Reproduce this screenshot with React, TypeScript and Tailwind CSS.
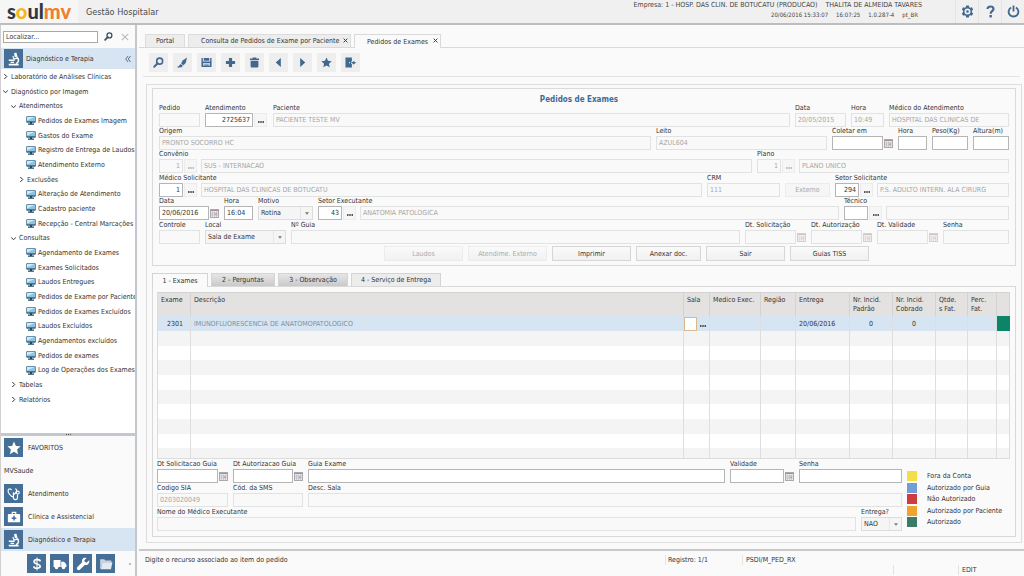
import { useId, useState } from 'react';
import type { ReactNode } from 'react';
import { clsx } from 'clsx';

type MenuItem = { label: string; level: number; state?: 'open' | 'closed' };

const MENU: MenuItem[] = [
  { label: 'Laboratório de Análises Clínicas', level: 0, state: 'closed' },
  { label: 'Diagnóstico por Imagem', level: 0, state: 'open' },
  { label: 'Atendimentos', level: 1, state: 'open' },
  { label: 'Pedidos de Exames Imagem', level: 2 },
  { label: 'Gastos do Exame', level: 2 },
  { label: 'Registro de Entrega de Laudos', level: 2 },
  { label: 'Atendimento Externo', level: 2 },
  { label: 'Exclusões', level: 2, state: 'closed' },
  { label: 'Alteração de Atendimento', level: 2 },
  { label: 'Cadastro paciente', level: 2 },
  { label: 'Recepção - Central Marcações', level: 2 },
  { label: 'Consultas', level: 1, state: 'open' },
  { label: 'Agendamento de Exames', level: 2 },
  { label: 'Exames Solicitados', level: 2 },
  { label: 'Laudos Entregues', level: 2 },
  { label: 'Pedidos de Exame por Paciente', level: 2 },
  { label: 'Pedidos de Exames Excluídos', level: 2 },
  { label: 'Laudos Excluídos', level: 2 },
  { label: 'Agendamentos excluídos', level: 2 },
  { label: 'Pedidos de exames', level: 2 },
  { label: 'Log de Operações dos Exames', level: 2 },
  { label: 'Tabelas', level: 1, state: 'closed' },
  { label: 'Relatórios', level: 1, state: 'closed' },
];

const COLUMNS = [
  { label: 'Exame', width: 'w-[33px]' },
  { label: 'Descrição', width: '' },
  { label: 'Sala', width: 'w-[26px]' },
  { label: 'Medico Exec.', width: 'w-[51px]' },
  { label: 'Região', width: 'w-[35px]' },
  { label: 'Entrega', width: 'w-[54px]' },
  { label: 'Nr. Incid. Padrão', width: 'w-[43px]' },
  { label: 'Nr. Incid. Cobrado', width: 'w-[43px]' },
  { label: 'Qtde.\ns Fat.', width: 'w-[32px]' },
  { label: 'Perc. Fat.', width: 'w-[29px]' },
  { label: '', width: 'w-[13px]' },
];

const LEGEND = [
  { label: 'Fora da Conta', color: 'bg-[#f2df45]' },
  { label: 'Autorizado por Guia', color: 'bg-[#6f9fd4]' },
  { label: 'Não Autorizado', color: 'bg-[#cf3b3e]' },
  { label: 'Autorizado por Paciente', color: 'bg-[#efa32f]' },
  { label: 'Autorizado', color: 'bg-[#3b7c68]' },
];

const DETAIL_TABS = ['1 - Exames', '2 - Perguntas', '3 - Observação', '4 - Serviço de Entrega'];

/* ---------- Ícones ---------- */

function Svg({ children, className }: { children: ReactNode; className?: string }) {
  return (
    <svg viewBox="0 0 24 24" fill="currentColor" className={clsx('shrink-0', className)} aria-hidden>
      {children}
    </svg>
  );
}

const ICONS = {
  search: (
    <>
      <circle cx="14.5" cy="9" r="6.5" fill="none" stroke="currentColor" strokeWidth="3.4" />
      <path d="M10 13.5 3 21" stroke="currentColor" strokeWidth="4.6" strokeLinecap="round" />
    </>
  ),
  brush: (
    <>
      <path d="M22 1 13 7l-4 7 5 4 5-5z" />
      <path d="m8 15 5 4-3 3.500-9 .5z" />
      <path d="M1 20h3v3H1z" opacity=".6" />
    </>
  ),
  save: (
    <path
      fillRule="evenodd"
      d="M1 2h3v8h16V2h3v20H1zM6 2h12v6H6zM5 13v6h14v-6zm2 1.500h10v1.300H7zm0 2.500h10v1.300H7z"
    />
  ),
  plus: <path d="M8.500 2h7v6.500H22v7h-6.500V22h-7v-6.500H2v-7h6.500z" />,
  trash: <path d="M8 1h8v2h6v3.500H2V3h6zM3.500 8h17v12.500a2.500 2.500 0 0 1-2.500 2.500H6a2.500 2.500 0 0 1-2.500-2.500z" />,
  prev: <path d="M17 2v20L6 12z" />,
  next: <path d="M7 2v20l11-10z" />,
  star: <path d="m12 1 3.300 7.400 8 .8-6 5.400 1.700 7.900-7-4.100-7 4.100 1.700-7.900-6-5.400 8-.8z" />,
  exit: (
    <path
      fillRule="evenodd"
      d="M1 1h14v9h-2v5h2v8H1zm8 10v2.500h2V11zM18 8l6 4.500-6 4.500v-3h-4v-3h4z"
    />
  ),
  gear: (
    <path
      fillRule="evenodd"
      d="M9.500 1h5l.7 3 1.800 1 3-.9 2.500 4.300-2.300 2.100v3l2.300 2.100-2.500 4.300-3-.9-1.800 1-.7 3h-5l-.7-3-1.800-1-3 .9-2.500-4.300 2.300-2.100v-3L1.500 8.400 4 4.100l3 .9 1.800-1zM12 6.500a5.500 5.500 0 1 0 0 11 5.500 5.500 0 0 0 0-11zm0 3a2.500 2.500 0 1 1 0 5 2.500 2.500 0 0 1 0-5z"
    />
  ),
  help: (
    <>
      <path
        d="M6.500 7.500C6.500 4 9 2.800 12 2.800s5.500 1.700 5.500 4.700c0 4-5.200 4-5.200 8.500"
        fill="none"
        stroke="currentColor"
        strokeWidth="4"
      />
      <path d="M10 18.500h4.500V23H10z" />
    </>
  ),
  power: (
    <g fill="none" stroke="currentColor" strokeWidth="3.400">
      <path d="M7.500 4.500a9 9 0 1 0 9 0" />
      <path d="M12 1v11" />
    </g>
  ),
  microscope: (
    <>
      <path d="m12 2 4-1 2 7-4.500 1.200z" />
      <path d="m10 7 2 5 6-1.500" fill="none" stroke="currentColor" strokeWidth="2" />
      <path d="M16.500 9c5 3 4 9-1 11" fill="none" stroke="currentColor" strokeWidth="2.600" />
      <path d="M3 13h10v2.500H3zM6 16.500h6V19H6zM3 20h17v3H3z" />
    </>
  ),
  stethoscope: (
    <g fill="none" stroke="currentColor" strokeWidth="2">
      <path d="M5 3C1 3 1 8 4 12c2 3 4 5 7 5M5 3l3 2M14 3c4 0 3 7-3 10" />
      <path d="M11 9v9c0 5 7 5 7 0v-5" />
      <circle cx="18.500" cy="9.500" r="2.500" />
    </g>
  ),
  kit: (
    <path
      fillRule="evenodd"
      d="M8 3h8v4h5a1.500 1.500 0 0 1 1.500 1.500v11A1.500 1.500 0 0 1 21 21H3a1.500 1.500 0 0 1-1.500-1.500v-11A1.500 1.500 0 0 1 3 7h5zm2 2v2h4V5zm.7 5v2.700H8v2.600h2.700V18h2.600v-2.700H16v-2.600h-2.700V10z"
    />
  ),
  dollar: (
    <g fill="none" stroke="currentColor" strokeWidth="2.800">
      <path d="M17.500 7.500C17 3.500 7 3.500 7 8s10.500 3.500 10.500 8-10.500 4.500-11 0" />
      <path d="M12 1v22" strokeWidth="1.800" />
    </g>
  ),
  truck: (
    <>
      <path d="M1 5h12v12H1zM14 8h5l4 5v4h-9z" />
      <circle cx="6" cy="18" r="3" />
      <circle cx="18" cy="18" r="3" />
    </>
  ),
  wrench: (
    <path d="M22.500 5.500 18.500 9.500 15 8.500 14.300 5.500 18 1.500C13 0 9 4 10.500 9L2 17.500c-2 3 2 6.500 4.500 4.500L15 13.500c5 1.500 9-3 7.500-8z" />
  ),
  folder: (
    <>
      <path d="M2 4h7l2 2h10v3H6L3 20H2z" opacity=".7" />
      <path d="M6 9h17l-2.500 12H3z" opacity=".85" />
    </>
  ),
};

type IconName = keyof typeof ICONS;

function Icon({ name, className }: { name: IconName; className?: string }) {
  return <Svg className={className}>{ICONS[name]}</Svg>;
}

function Tile({ name }: { name: IconName }) {
  return (
    <span className="flex size-[19px] shrink-0 items-center justify-center bg-[#466f98] text-white">
      <Icon name={name} className="size-3.5" />
    </span>
  );
}

function Monitor() {
  return (
    <svg viewBox="0 0 20 18" className="h-[9px] w-2.5 shrink-0" aria-hidden>
      <rect x="1" y="1" width="18" height="11" rx="1" fill="#8cc3e0" stroke="#4a7391" strokeWidth="1.500" />
      <path d="M2 2h15L2 9z" fill="#cfe9f6" />
      <path d="M1 11h18v2H1zM8 13h4v2h4v2.500H4V15h4z" fill="#234a63" />
    </svg>
  );
}

function Calendar({ faded }: { faded?: boolean }) {
  return (
    <button type="button" aria-label="Abrir calendário" className={clsx('ml-px shrink-0', faded && 'opacity-50')}>
      <svg viewBox="0 0 18 18" className="block size-[9px]">
        <rect x="1" y="1" width="16" height="16" fill="#ececee" stroke="#a9a9b0" strokeWidth="2" />
        <path d="M1 3h16" stroke="#a58f93" strokeWidth="2" />
        <path d="M5 5v12M9 5v12M13 5v12M2 8h14M2 12h14" stroke="#a8a8b0" />
        <path d="M10 9h4v3h-4z" fill="#d39a9a" />
      </svg>
    </button>
  );
}

/* ---------- Campos ---------- */

function Field({
  label,
  id,
  className,
  children,
}: {
  label: string;
  id: string;
  className?: string;
  children: ReactNode;
}) {
  return (
    <div className={clsx('min-w-0', className)}>
      <label htmlFor={id} className="block h-[9px] leading-[9px] whitespace-nowrap">
        {label}
      </label>
      <div className="flex items-center">{children}</div>
    </div>
  );
}

function Box({
  id,
  value = '',
  width = 'w-full',
  disabled,
  right,
  title,
}: {
  id?: string;
  value?: string;
  width?: string;
  disabled?: boolean;
  right?: boolean;
  title?: string;
}) {
  return (
    <input
      id={id}
      aria-label={title}
      type="text"
      defaultValue={value}
      disabled={disabled}
      className={clsx(
        'h-3.5 min-w-0 border px-0.5 leading-3 outline-none',
        width,
        right && 'text-right',
        disabled
          ? 'border-[#e2e2e2] bg-[#f9f9f9] text-[#a6a6a6]'
          : 'border-[#b5b5b5] bg-white text-[#333]',
      )}
    />
  );
}

function TextField({
  label,
  value,
  width,
  disabled,
  right,
  calendar,
}: {
  label: string;
  value?: string;
  width: string;
  disabled?: boolean;
  right?: boolean;
  calendar?: boolean;
}) {
  const id = useId();
  return (
    <Field label={label} id={id} className={calendar ? 'shrink-0' : width}>
      <Box id={id} value={value} width={calendar ? width : 'w-full'} disabled={disabled} right={right} />
      {calendar && <Calendar faded={disabled} />}
    </Field>
  );
}

function Dots({ disabled }: { disabled?: boolean }) {
  return (
    <button
      type="button"
      aria-label="Lista de valores"
      disabled={disabled}
      className={clsx(
        'ml-px flex h-3.5 w-[13px] shrink-0 items-center justify-center border border-[#ececec] bg-[#f6f6f6] pt-1',
        disabled ? 'text-[#aaa]' : 'text-[#222]',
      )}
    >
      <Ellipsis />
    </button>
  );
}

function Ellipsis() {
  return (
    <svg viewBox="0 0 12 3" className="h-[2px] w-1.5" fill="currentColor" aria-hidden>
      <path d="M0 0h3v3H0zM4.500 0h3v3h-3zM9 0h3v3H9z" />
    </svg>
  );
}

// código + botão de lista + descrição
function LookupField({
  label,
  code,
  text,
  className,
  disabled,
}: {
  label: string;
  code: string;
  text: string;
  className: string;
  disabled?: boolean;
}) {
  const id = useId();
  return (
    <Field label={label} id={id} className={className}>
      <Box id={id} value={code} width="w-6 shrink-0" disabled={disabled} right />
      <Dots disabled={disabled} />
      <span className="w-1 shrink-0" />
      <Box title={`${label} - descrição`} value={text} width="flex-1" disabled />
    </Field>
  );
}

function SelectField({ label, value, width }: { label: string; value: string; width: string }) {
  const id = useId();
  return (
    <Field label={label} id={id} className={width}>
      <div className="relative w-full">
        <select
          id={id}
          defaultValue={value}
          className="block h-3.5 w-full appearance-none border border-[#dcdcdc] bg-[#f5f5f5] pl-0.5 text-[#333] outline-none"
        >
          <option>{value}</option>
        </select>
        <span className="pointer-events-none absolute inset-y-px right-px flex w-3 items-center justify-center border-l border-[#e6e6e6]">
          <svg viewBox="0 0 8 5" className="h-[3px] w-1">
            <path d="M0 0h8L4 5z" fill="#777" />
          </svg>
        </span>
      </div>
    </Field>
  );
}

function ActionButton({ label, width = 'w-[79px]', disabled }: { label: string; width?: string; disabled?: boolean }) {
  return (
    <button
      type="button"
      disabled={disabled}
      className={clsx(
        'h-[15px] border bg-linear-to-b from-[#fafafa] to-[#f1f1f1]',
        width,
        disabled ? 'border-[#ececec] text-[#ababab]' : 'border-[#d6d6d6] text-[#333]',
      )}
    >
      {label}
    </button>
  );
}

/* ---------- Estrutura ---------- */

function Header() {
  return (
    <header className="flex h-[25px] shrink-0 items-stretch border-b-2 border-[#bdbdbd] bg-[#f0f0f0]">
      <div className="flex w-[78px] items-center bg-[#f6f6f6] pb-0.5 pl-[7px] font-['Lato'] text-[20px] leading-5 font-black">
        <span className="text-[#35373c]">s</span>
        <span className="text-[#f5b818]">o</span>
        <span className="text-[#35373c]">ul</span>
        <span className="text-[#ee7f32]">mv</span>
      </div>
      <h1 className="flex flex-1 items-center pl-2 text-[9px] text-[#4a4a4a]">Gestão Hospitalar</h1>
      <div className="pr-[33px] text-right leading-[10px] text-[#444]">
        <p>
          Empresa: 1 - HOSP. DAS CLIN. DE BOTUCATU (PRODUCAO)
          <span className="ml-2">THALITA DE ALMEIDA TAVARES</span>
        </p>
        <p className="flex justify-end gap-2 pr-1 text-[6px]">
          <span>20/06/2016 15:33:07</span>
          <span>16:07:25</span>
          <span>1.0.287-4</span>
          <span>pt_BR</span>
        </p>
      </div>
      {(['gear', 'help', 'power'] as const).map((name) => (
        <button
          key={name}
          type="button"
          aria-label={name}
          className="flex w-[23px] items-center justify-center border-l border-[#e4e4e4] text-[#44698f]"
        >
          <Icon name={name} className="size-[13px]" />
        </button>
      ))}
    </header>
  );
}

function Sidebar() {
  return (
    <aside className="flex w-[137px] shrink-0 flex-col border-r-2 border-l border-r-[#c4c7cb] border-l-[#d0d0d0] bg-white">
      <div className="flex h-[23px] items-center bg-[#fafafa] pl-0.5">
        <input
          type="text"
          aria-label="Localizar"
          placeholder="Localizar..."
          className="h-3 w-[95px] border border-[#a9a9a9] bg-white px-0.5 outline-none placeholder:text-[#333]"
        />
        <button type="button" aria-label="Pesquisar" className="ml-1 p-0.5 text-[#3d4f63]">
          <Icon name="search" className="size-[9px]" />
        </button>
        <button type="button" aria-label="Limpar" className="ml-1 p-0.5 text-[#bbb]">
          <svg viewBox="0 0 10 10" className="size-2">
            <path d="m1 1 8 8M9 1 1 9" stroke="currentColor" strokeWidth="1.500" />
          </svg>
        </button>
      </div>

      <div className="flex h-[21px] items-center bg-[#d7e5f3] pr-1 pl-[3px]">
        <Tile name="microscope" />
        <span className="flex-1 pl-[3px]">Diagnóstico e Terapia</span>
        <button type="button" aria-label="Recolher menu" className="text-[#44698f]">
          <svg viewBox="0 0 12 12" className="size-1.5">
            <path d="M6 0 1.500 6 6 12M11 0 6.500 6l4.500 6" fill="none" stroke="currentColor" strokeWidth="1.800" />
          </svg>
        </button>
      </div>

      <nav>
        <ul>
          {MENU.map((item) => (
            <li key={item.label} className="h-[15px] nth-[3n]:h-3.5">
              <a
                href="#"
                className={clsx(
                  'flex h-full items-center overflow-hidden whitespace-nowrap',
                  item.level === 0 && 'pl-0.5',
                  item.level === 1 && 'pl-2.5',
                  item.level === 2 && item.state && 'pl-[18px]',
                  item.level === 2 && !item.state && 'pl-[25px]',
                )}
              >
                {item.state ? (
                  <svg viewBox="0 0 10 10" className={clsx('size-[5px] shrink-0', item.state === 'open' && 'rotate-90')}>
                    <path d="m2.500 0 5 5-5 5" fill="none" stroke="#333" strokeWidth="2" />
                  </svg>
                ) : (
                  <Monitor />
                )}
                <span className={item.state ? 'ml-[3px]' : 'ml-0.5'}>{item.label}</span>
              </a>
            </li>
          ))}
        </ul>
      </nav>
      <div className="min-h-6 flex-1" />

      <div className="flex h-[3px] items-center justify-center gap-px bg-[#c3c7cf]">
        <i className="size-px bg-[#555]" />
        <i className="size-px bg-[#555]" />
        <i className="size-px bg-[#555]" />
      </div>

      <div className="bg-[#fafafa]">
        <a href="#" className="flex h-[23px] items-center gap-[5px] pl-[3px]">
          <Tile name="star" />
          FAVORITOS
        </a>
        <p className="flex h-[23px] items-center pl-[3px]">MVSaude</p>
        <a href="#" className="flex h-[23px] items-center gap-[5px] pl-[3px]">
          <Tile name="stethoscope" />
          Atendimento
        </a>
        <a href="#" className="flex h-[23px] items-center gap-[5px] pl-[3px]">
          <Tile name="kit" />
          Clínica e Assistencial
        </a>
        <a href="#" className="flex h-[23px] items-center gap-[5px] bg-[#d7e5f3] pl-[3px]">
          <Tile name="microscope" />
          Diagnóstico e Terapia
        </a>
        <div className="flex h-[25px] items-center gap-1 pl-[26px]">
          {(['dollar', 'truck', 'wrench', 'folder'] as const).map((name) => (
            <button key={name} type="button" aria-label={name}>
              <Tile name={name} />
            </button>
          ))}
          <i className="ml-2.5 size-0.5 bg-[#bbb]" />
        </div>
      </div>
    </aside>
  );
}

function WindowTabs() {
  const close = (
    <svg viewBox="0 0 8 8" className="mb-0.5 size-[5px] shrink-0">
      <path d="m1 1 6 6M7 1 1 7" stroke="#333" strokeWidth="1.500" />
    </svg>
  );
  return (
    <div className="mt-[9px] flex h-3.5 items-end border-b border-[#d9d9d9] pl-1.5">
      <button type="button" className="h-[13px] w-10 border border-b-0 border-[#dcdcdc] bg-[#ededed]">
        Portal
      </button>
      <button
        type="button"
        className="ml-[3px] flex h-[13px] w-[163px] items-center justify-between border border-b-0 border-[#dcdcdc] bg-[#ededed] pr-0.5 pl-3"
      >
        Consulta de Pedidos de Exame por Paciente
        {close}
      </button>
      <button
        type="button"
        className="-mb-px ml-[3px] flex h-3.5 w-[87px] items-center justify-between border border-b-0 border-[#d9d9d9] bg-[#fafafa] pr-0.5 pl-3"
      >
        Pedidos de Exames
        {close}
      </button>
    </div>
  );
}

function Toolbar() {
  const tools = ['search', 'brush', 'save', 'plus', 'trash', 'prev', 'next', 'star', 'exit'] as const;
  return (
    <div className="mx-1 flex h-[29px] items-center gap-[5px] border-b border-[#e4e4e4] pt-px pl-1.5">
      {tools.map((name) => (
        <button
          key={name}
          type="button"
          aria-label={name}
          className="flex size-[19px] items-center justify-center bg-[#eeeeee] text-[#41688f]"
        >
          <Icon name={name} className="size-[11px]" />
        </button>
      ))}
    </div>
  );
}

function OrderForm() {
  const id = useId();
  return (
    <section className="border border-[#dadada] px-1.5 pb-1">
      <h2 className="h-[15px] pt-1 pr-2.5 text-center text-[8px] leading-[14px] font-bold text-[#3f6a97]">
        Pedidos de Exames
      </h2>

      <div className="flex gap-[5px]">
        <TextField label="Pedido" width="w-[41px]" disabled />
        <Field label="Atendimento" id={id} className="w-[63px] shrink-0">
          <Box id={id} value="2725637" width="w-12" right />
          <Dots />
        </Field>
        <TextField label="Paciente" value="PACIENTE TESTE MV" width="flex-1" disabled />
        <TextField label="Data" value="20/05/2015" width="w-[51px]" disabled />
        <TextField label="Hora" value="10:49" width="w-[33px]" disabled />
        <TextField label="Médico do Atendimento" value="HOSPITAL DAS CLINICAS DE" width="w-[120px]" disabled />
      </div>

      <div className="flex gap-[5px]">
        <TextField label="Origem" value="PRONTO SOCORRO HC" width="flex-1" disabled />
        <TextField label="Leito" value="AZUL604" width="w-[171px]" disabled />
        <TextField label="Coletar em" width="w-[51px]" calendar />
        <TextField label="Hora" width="w-[29px]" />
        <TextField label="Peso(Kg)" width="w-9" />
        <TextField label="Altura(m)" width="w-9" />
      </div>

      <div className="flex gap-[5px]">
        <LookupField label="Convênio" code="1" text="SUS - INTERNACAO" className="flex-1" disabled />
        <LookupField label="Plano" code="1" text="PLANO UNICO" className="w-[252px]" disabled />
      </div>

      <div className="mt-px flex items-end gap-[5px]">
        <LookupField label="Médico Solicitante" code="1" text="HOSPITAL DAS CLINICAS DE BOTUCATU" className="flex-1" />
        <TextField label="CRM" value="111" width="w-[73px]" disabled />
        <button type="button" disabled className="h-3.5 w-[45px] border border-[#ececec] bg-[#f6f6f6] text-[#a6a6a6]">
          Externo
        </button>
        <LookupField label="Setor Solicitante" code="294" text="P.S. ADULTO INTERN. ALA CIRURG" className="w-[174px]" />
      </div>

      <div className="flex gap-[5px]">
        <TextField label="Data" value="20/06/2016" width="w-[50px]" calendar />
        <TextField label="Hora" value="16:04" width="w-[29px]" />
        <SelectField label="Motivo" value="Rotina" width="w-[55px]" />
        <LookupField label="Setor Executante" code="43" text="ANATOMIA PATOLOGICA" className="flex-1" />
        <LookupField label="Técnico" code="" text="" className="w-[165px]" />
      </div>

      <div className="mt-px flex gap-[5px]">
        <TextField label="Controle" width="w-[41px]" disabled />
        <SelectField label="Local" value="Sala de Exame" width="w-[81px]" />
        <TextField label="Nº Guia" width="flex-1" disabled />
        <TextField label="Dt. Solicitação" width="w-[51px]" disabled calendar />
        <TextField label="Dt. Autorização" width="w-[51px]" disabled calendar />
        <TextField label="Dt. Validade" width="w-[51px]" disabled calendar />
        <TextField label="Senha" width="w-[66px]" disabled />
      </div>

      <div className="mt-0.5 flex justify-end gap-[5px] pr-[140px]">
        <ActionButton label="Laudos" disabled />
        <ActionButton label="Atendime. Externo" disabled />
        <ActionButton label="Imprimir" />
        <ActionButton label="Anexar doc." width="w-[65px]" />
        <ActionButton label="Sair" />
        <ActionButton label="Guias TISS" />
      </div>
    </section>
  );
}

function ExamsTable() {
  const cell = 'border-r border-[#dedede] p-0';
  return (
    <table className="w-full table-fixed border-separate border-spacing-0 border-b border-l border-[#dcdcdc]">
      <thead>
        <tr className="h-6 bg-[#e4e2e0]">
          {COLUMNS.map((col) => (
            <th
              key={col.label}
              className={clsx(
                'border-t border-r border-[#d2d2d2] pt-[3px] pr-0 pb-0 pl-[3px] text-left align-top leading-[9px] font-normal whitespace-pre-line',
                col.width,
              )}
            >
              {col.label}
            </th>
          ))}
        </tr>
      </thead>
      <tbody>
        <tr className="h-[15px] bg-[#d7e5f3]">
          <td className={clsx(cell, 'pr-[7px] text-right')}>2301</td>
          <td className={clsx(cell, 'pl-[3px] text-[#7d8fa3]')}>IMUNOFLUORESCENCIA DE ANATOMOPATOLOGICO</td>
          <td className={cell}>
            <div className="flex">
              <input type="text" aria-label="Sala" className="h-3.5 w-[13px] border border-[#d9b98a] bg-white outline-none" />
              <button type="button" aria-label="Lista de salas" className="flex w-3 items-center justify-center pt-1 text-[#222]">
                <Ellipsis />
              </button>
            </div>
          </td>
          <td className={cell} />
          <td className={cell} />
          <td className={clsx(cell, 'pl-[3px]')}>20/06/2016</td>
          <td className={clsx(cell, 'text-center')}>0</td>
          <td className={clsx(cell, 'text-center')}>0</td>
          <td className={cell} />
          <td className={cell} />
          <td className="bg-[#0b8468] p-0" />
        </tr>
        {Array.from({ length: 9 }, (_, row) => (
          <tr
            key={row}
            className={clsx(
              row === 8 ? 'h-2.5' : row % 3 === 1 ? 'h-3.5' : 'h-[15px]',
              row % 2 === 0 ? 'bg-[#f4f4f4]' : 'bg-white',
            )}
          >
            {COLUMNS.map((col) => (
              <td key={col.label} className={cell} />
            ))}
          </tr>
        ))}
      </tbody>
    </table>
  );
}

function ExamDetails() {
  return (
    <div className="flex gap-[5px]">
      <div className="min-w-0 flex-1">
        <div className="flex gap-[5px]">
          <TextField label="Dt Solicitacao Guia" width="w-[61px]" calendar />
          <TextField label="Dt Autorizacao Guia" width="w-[60px]" calendar />
          <TextField label="Guia Exame" width="flex-1" />
          <TextField label="Validade" width="w-[54px]" calendar />
          <TextField label="Senha" width="w-[103px]" />
        </div>
        <div className="mt-px flex gap-[5px]">
          <TextField label="Codigo SIA" value="0203020049" width="w-[71px]" disabled />
          <TextField label="Cód. da SMS" width="w-[70px]" disabled />
          <TextField label="Desc. Sala" width="flex-1" disabled />
        </div>
        <div className="mt-px flex gap-[5px]">
          <TextField label="Nome do Médico Executante" width="flex-1" disabled />
          <SelectField label="Entrega?" value="NAO" width="w-[41px]" />
        </div>
      </div>
      <ul className="w-[103px] pt-2.5">
        {LEGEND.map((item) => (
          <li key={item.label} className="flex h-3 items-center gap-2.5 nth-[2n]:h-[11px]">
            <i className={clsx('size-2.5 shrink-0', item.color)} />
            <span className="whitespace-nowrap">{item.label}</span>
          </li>
        ))}
      </ul>
    </div>
  );
}

function ExamsPanel() {
  const [active, setActive] = useState(0);
  return (
    <section className="mt-1.5">
      <div className="flex h-3.5 items-end gap-[3px]">
        {DETAIL_TABS.map((tab, i) => (
          <button
            key={tab}
            type="button"
            onClick={() => setActive(i)}
            className={clsx(
              'border border-b-0 border-[#d4d4d4]',
              i === 0 && 'w-14',
              i === 1 && 'w-16',
              i === 2 && 'w-[70px]',
              i === 3 && 'w-[90px]',
              i === active && 'relative -mb-px h-3.5 bg-[#fafafa]',
              i !== active && i === 3 && 'h-[13px] bg-[#ececec]',
              i !== active && i !== 3 && 'h-[13px] bg-linear-to-b from-[#e6e6e6] to-[#c9c9c9]',
            )}
          >
            {tab}
          </button>
        ))}
      </div>
      <div className="border border-[#d9d9d9] pt-[5px] pr-[5px] pb-[5px] pl-1">
        <ExamsTable />
        <div className="mt-px">
          <ExamDetails />
        </div>
      </div>
    </section>
  );
}

function StatusBar() {
  return (
    <footer className="mt-1.5 flex-1 border-t-2 border-[#c9c9c9] pt-1 pl-1.5 leading-[10px]">
      <div className="flex">
        <p className="flex-1">Digite o recurso associado ao item do pedido</p>
        <p className="w-[77px] border-l border-[#e4e4e4] pl-0.5">Registro: 1/1</p>
        <p className="w-[282px] border-l border-[#e4e4e4] pl-[3px]">PSDI/M_PED_RX</p>
      </div>
      <div className="flex justify-end">
        <p className="h-2.5 w-[65px] border-l border-[#e4e4e4]" />
        <p className="w-[66px] border-l border-[#e4e4e4] pl-[3px]">EDIT</p>
      </div>
    </footer>
  );
}

export default function App() {
  return (
    <div className="flex min-h-screen flex-col bg-[#fafafa] font-['DejaVu_Sans_Condensed','Noto_Sans',sans-serif] text-[7px] leading-[10px] text-[#333]">
      <Header />
      <div className="flex flex-1">
        <Sidebar />
        <main className="flex min-w-0 flex-1 flex-col pl-0.5">
          <WindowTabs />
          <Toolbar />
          <div className="mt-[7px] mr-0.5 ml-[7px] border border-[#dedede] px-[5px] pt-[3px] pb-[5px]">
            <OrderForm />
            <ExamsPanel />
          </div>
          <StatusBar />
        </main>
      </div>
    </div>
  );
}
